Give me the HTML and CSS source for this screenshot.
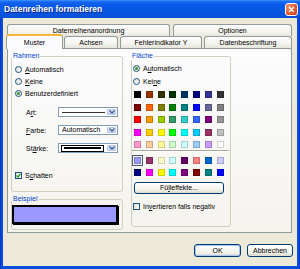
FILE: index.html
```html
<!DOCTYPE html>
<html lang="de">
<head>
    <meta charset="UTF-8">
    <title>Datenreihen formatieren</title>
    <link rel="stylesheet" href="styles.css">
</head>
<body>
    <div class="window">
        <div class="titlebar">
            <span class="title">Datenreihen formatieren</span>
            <span class="close">
                <svg width="13" height="13" viewBox="0 0 13 13">
                    <path d="M4 4 L9 9 M9 4 L4 9" stroke="#fff" stroke-width="1.6" stroke-linecap="round"/>
                </svg>
            </span>
        </div>
        <div class="client">
            <div class="tabrow">
                <div class="tab tab-anordnung">Datenreihenanordnung</div>
                <div class="tab tab-optionen">Optionen</div>
            </div>
            <div class="tabrow">
                <div class="tab tab-muster active">Muster</div>
                <div class="tab tab-achsen">Achsen</div>
                <div class="tab tab-fehler">Fehlerindikator Y</div>
                <div class="tab tab-beschriftung">Datenbeschriftung</div>
            </div>

            <div class="panel">
                <div class="col-left">
                    <fieldset class="group group-rahmen">
                        <legend>Rahmen</legend>
                        <div class="option"><span class="radio"></span><span><u>A</u>utomatisch</span></div>
                        <div class="option"><span class="radio"></span><span><u>K</u>eine</span></div>
                        <div class="option"><span class="radio checked"></span><span>Benutzerdefiniert</span></div>

                        <div class="field">
                            <span class="field-label">A<u>r</u>t:</span>
                            <div class="combo">
                                <span class="combo-value"><span class="line-thin"></span></span>
                                <span class="combo-btn"><svg width="6" height="4" viewBox="0 0 6 4"><path d="M0.5 0.5 L3 3 L5.5 0.5" fill="none" stroke="#4d6185" stroke-width="1.3"/></svg></span>
                            </div>
                        </div>
                        <div class="field">
                            <span class="field-label"><u>F</u>arbe:</span>
                            <div class="combo">
                                <span class="combo-value combo-text">Automatisch</span>
                                <span class="combo-btn"><svg width="6" height="4" viewBox="0 0 6 4"><path d="M0.5 0.5 L3 3 L5.5 0.5" fill="none" stroke="#4d6185" stroke-width="1.3"/></svg></span>
                            </div>
                        </div>
                        <div class="field">
                            <span class="field-label">St<u>ä</u>rke:</span>
                            <div class="combo">
                                <span class="combo-value"><span class="selected-item"><span class="line-thick"></span></span></span>
                                <span class="combo-btn"><svg width="6" height="4" viewBox="0 0 6 4"><path d="M0.5 0.5 L3 3 L5.5 0.5" fill="none" stroke="#4d6185" stroke-width="1.3"/></svg></span>
                            </div>
                        </div>

                        <div class="option option-shadow"><span class="check checked"><svg width="5" height="5" viewBox="0 0 5 5"><path d="M0.5 2.5 L2 4 L4.5 1" fill="none" stroke="#21a121" stroke-width="1.3"/></svg></span><span>S<u>c</u>hatten</span></div>
                    </fieldset>

                    <fieldset class="group group-beispiel">
                        <legend>Beispiel</legend>
                        <div class="sample"></div>
                    </fieldset>
                </div>

                <fieldset class="group group-flaeche">
                    <legend>Fläche</legend>
                    <div class="option option-tall"><span class="radio checked"></span><span>A<u>u</u>tomatisch</span></div>
                    <div class="option option-tall"><span class="radio"></span><span>Kei<u>n</u>e</span></div>

                    <div class="palette">
                        <span class="swatch" style="background:#000000"></span>
                        <span class="swatch" style="background:#993300"></span>
                        <span class="swatch" style="background:#333300"></span>
                        <span class="swatch" style="background:#003300"></span>
                        <span class="swatch" style="background:#003366"></span>
                        <span class="swatch" style="background:#000080"></span>
                        <span class="swatch" style="background:#333399"></span>
                        <span class="swatch" style="background:#333333"></span>

                        <span class="swatch" style="background:#800000"></span>
                        <span class="swatch" style="background:#ff6600"></span>
                        <span class="swatch" style="background:#808000"></span>
                        <span class="swatch" style="background:#008000"></span>
                        <span class="swatch" style="background:#008080"></span>
                        <span class="swatch" style="background:#0000ff"></span>
                        <span class="swatch" style="background:#666699"></span>
                        <span class="swatch" style="background:#808080"></span>

                        <span class="swatch" style="background:#ff0000"></span>
                        <span class="swatch" style="background:#ff9900"></span>
                        <span class="swatch" style="background:#99cc00"></span>
                        <span class="swatch" style="background:#339966"></span>
                        <span class="swatch" style="background:#33cccc"></span>
                        <span class="swatch" style="background:#3366ff"></span>
                        <span class="swatch" style="background:#800080"></span>
                        <span class="swatch" style="background:#969696"></span>

                        <span class="swatch" style="background:#ff00ff"></span>
                        <span class="swatch" style="background:#ffcc00"></span>
                        <span class="swatch" style="background:#ffff00"></span>
                        <span class="swatch" style="background:#00ff00"></span>
                        <span class="swatch" style="background:#00ffff"></span>
                        <span class="swatch" style="background:#00ccff"></span>
                        <span class="swatch" style="background:#993366"></span>
                        <span class="swatch" style="background:#c0c0c0"></span>

                        <span class="swatch" style="background:#ff99cc"></span>
                        <span class="swatch" style="background:#ffcc99"></span>
                        <span class="swatch" style="background:#ffff99"></span>
                        <span class="swatch" style="background:#ccffcc"></span>
                        <span class="swatch" style="background:#ccffff"></span>
                        <span class="swatch" style="background:#99ccff"></span>
                        <span class="swatch" style="background:#cc99ff"></span>
                        <span class="swatch" style="background:#ffffff"></span>
                    </div>

                    <div class="separator"></div>

                    <div class="palette palette-chart">
                        <span class="swatch selected" style="background:#9999ff"></span>
                        <span class="swatch" style="background:#993366"></span>
                        <span class="swatch" style="background:#ffffcc"></span>
                        <span class="swatch" style="background:#ccffff"></span>
                        <span class="swatch" style="background:#660066"></span>
                        <span class="swatch" style="background:#ff8080"></span>
                        <span class="swatch" style="background:#0066cc"></span>
                        <span class="swatch" style="background:#ccccff"></span>

                        <span class="swatch" style="background:#000080"></span>
                        <span class="swatch" style="background:#ff00ff"></span>
                        <span class="swatch" style="background:#ffff00"></span>
                        <span class="swatch" style="background:#00ffff"></span>
                        <span class="swatch" style="background:#800080"></span>
                        <span class="swatch" style="background:#800000"></span>
                        <span class="swatch" style="background:#008080"></span>
                        <span class="swatch" style="background:#0000ff"></span>
                    </div>

                    <button class="btn btn-effects">Fü<u>l</u>leffekte...</button>

                    <div class="option option-invert"><span class="check"></span><span>In<u>v</u>ertieren falls negativ</span></div>
                </fieldset>
            </div>

            <div class="actions">
                <button class="btn btn-ok">OK</button>
                <button class="btn btn-cancel">Abbrechen</button>
            </div>
        </div>
    </div>
</body>
</html>
```

FILE: styles.css
```css
* {
    box-sizing: border-box;
}
body {
    margin: 0;
    font-family: "Liberation Sans", Arial, sans-serif;
    font-size: 7px;
    color: #000;
    background: #fff;
}
.window {
    width: 300px;
    height: 269px;
    background: linear-gradient(90deg, #0832c4, #0a4ee0 2px, #0a4ee0 calc(100% - 2px), #0832c4);
    padding: 0 3px 3px;
    display: flex;
    flex-direction: column;
}
.titlebar {
    height: 18px;
    margin: 0 -3px;
    padding: 0 2px 0 4px;
    background: linear-gradient(#3e93ff 0, #1466f0 2px, #0a5ce8 5px, #0556e3 12px, #0a50d8 18px);
    display: flex;
    align-items: center;
    justify-content: space-between;
}
.title {
    color: #fff;
    font-weight: bold;
    font-size: 8.5px;
    text-shadow: 1px 1px 0 #0a1e8c;
}
.close {
    width: 13px;
    height: 13px;
    border: 1px solid #fff;
    border-radius: 3px;
    background: radial-gradient(circle at 30% 30%, #f09a7c, #e0532c 60%, #c8401c);
    display: flex;
    align-items: center;
    justify-content: center;
}
.close svg {
    display: block;
}
.client {
    flex: 1;
    background: #ece9d8;
    padding: 6px 4px 0 4px;
    display: flex;
    flex-direction: column;
}

/* tabs */
.tabrow {
    display: flex;
    align-items: flex-start;
    height: 12px;
}
.tab {
    height: 12px;
    border: 1px solid #919b9c;
    border-bottom: none;
    border-radius: 3px 3px 0 0;
    background: linear-gradient(#fefefe, #f4f3ee 60%, #e6e5dc);
    text-align: center;
    line-height: 11px;
}
.tab-anordnung { width: 163px; }
.tab-optionen { width: 119px; margin-left: 3px; }
.tab-muster { width: 57px; margin-left: -1px; }
.tab-achsen { width: 54px; margin-left: 1px; }
.tab-fehler { width: 82px; margin-left: 2px; }
.tab-beschriftung { width: 88px; margin-left: 2px; }
.tab.active {
    position: relative;
    z-index: 1;
    height: 15px;
    margin-top: -2px;
    border-top: 2px solid #f8b636;
    background: #fcfcfe;
    line-height: 13px;
}

/* panel */
.panel {
    width: 285px;
    height: 185px;
    border: 1px solid #919b9c;
    background: linear-gradient(#fcfcfe, #f7f6f2 70%, #f4f3ee);
    padding: 3px 0 0 3px;
    display: flex;
    gap: 8px;
}
.col-left {
    width: 112px;
    display: flex;
    flex-direction: column;
    gap: 3px;
}
.group {
    margin: 0;
    border: 1px solid #d0d0bf;
    border-radius: 3px;
    min-width: 0;
}
.group legend {
    color: #0046d5;
    line-height: 8px;
    padding: 0 1px;
}
.group-rahmen {
    height: 140px;
    padding: 3px 3px 0 3px;
}
.group-rahmen legend {
    margin-left: -3px;
}
.group-beispiel {
    height: 35px;
    padding: 1px 3px 0 0;
}
.group-flaeche {
    width: 100px;
    height: 175px;
    padding: 2px 0 0 1px;
}
.group-flaeche legend {
    margin-left: -2px;
}

/* radios and checkboxes */
.option {
    display: flex;
    align-items: center;
    gap: 3px;
    height: 12px;
}
.option-tall {
    height: 13px;
}
.option-shadow {
    margin-top: 16px;
}
.option-invert {
    margin-top: 6px;
}
.radio {
    width: 7px;
    height: 7px;
    border: 1px solid #1c5180;
    border-radius: 50%;
    background: linear-gradient(135deg, #dcdcd4, #fff);
    display: flex;
    align-items: center;
    justify-content: center;
}
.radio.checked::after {
    content: "";
    width: 3px;
    height: 3px;
    border-radius: 50%;
    background: #2b9a2b;
}
.check {
    width: 7px;
    height: 7px;
    border: 1px solid #1c5180;
    background: linear-gradient(135deg, #dcdcd4, #fff);
    display: flex;
    align-items: center;
    justify-content: center;
}
.check svg {
    display: block;
}

/* combos */
.field {
    display: flex;
    align-items: center;
    height: 10px;
    margin-top: 8px;
}
.field-label {
    width: 32px;
    margin-left: 11px;
}
.combo {
    width: 60px;
    height: 10px;
    border: 1px solid #7f9db9;
    background: #fff;
    display: flex;
    padding: 1px;
}
.combo-value {
    flex: 1;
    display: flex;
    align-items: center;
    padding: 0 2px;
}
.combo-text {
    line-height: 8px;
}
.line-thin {
    width: 100%;
    height: 1px;
    background: #333;
}
.selected-item {
    width: 100%;
    height: 7px;
    border: 1px solid #000;
    display: flex;
    align-items: center;
    padding: 0 2px;
    margin: 0 -1px;
}
.line-thick {
    width: 100%;
    height: 2px;
    background: #000;
}
.combo-btn {
    width: 9px;
    border: 1px solid #b9c9ef;
    border-radius: 1px;
    background: linear-gradient(#dce6fd, #b9cdf8);
    display: flex;
    align-items: center;
    justify-content: center;
}
.combo-btn svg {
    display: block;
}

/* sample */
.sample {
    width: 106px;
    height: 19px;
    margin-top: 1px;
    border: 2px solid #000;
    box-shadow: 1px 1px 0 #000;
    background: #9999ff;
}

/* palette */
.palette {
    display: grid;
    grid-template-columns: repeat(8, 7px);
    grid-auto-rows: 7px;
    column-gap: 4.8px;
    row-gap: 5.5px;
    margin: 3px 0 0 1px;
}
.palette-chart {
    row-gap: 5px;
    margin-top: 4.5px;
}
.swatch {
    border: 1px solid rgba(0, 0, 0, 0.18);
}
.swatch.selected {
    outline: 1px solid #4a5a7a;
    outline-offset: 1px;
}
.separator {
    margin: 2px 1px 0 -1px;
    border-top: 1px solid #aca899;
    border-bottom: 1px solid #fff;
}

/* buttons */
.btn {
    font-family: inherit;
    font-size: 7px;
    color: #000;
    padding: 0;
    border: 1px solid #003c74;
    border-radius: 3px;
    background: linear-gradient(#ffffff, #f2f1ea 70%, #dcd8cc);
    line-height: 10px;
}
.btn-effects {
    width: 90px;
    height: 12px;
    margin: 6.5px 0 0 1px;
}
.actions {
    display: flex;
    justify-content: flex-end;
    gap: 6px;
    margin-top: 11px;
}
.btn-ok {
    width: 47px;
    height: 13px;
    box-shadow: inset 0 0 0 1px #a8c4f4;
}
.btn-cancel {
    width: 46px;
    height: 13px;
}
```
